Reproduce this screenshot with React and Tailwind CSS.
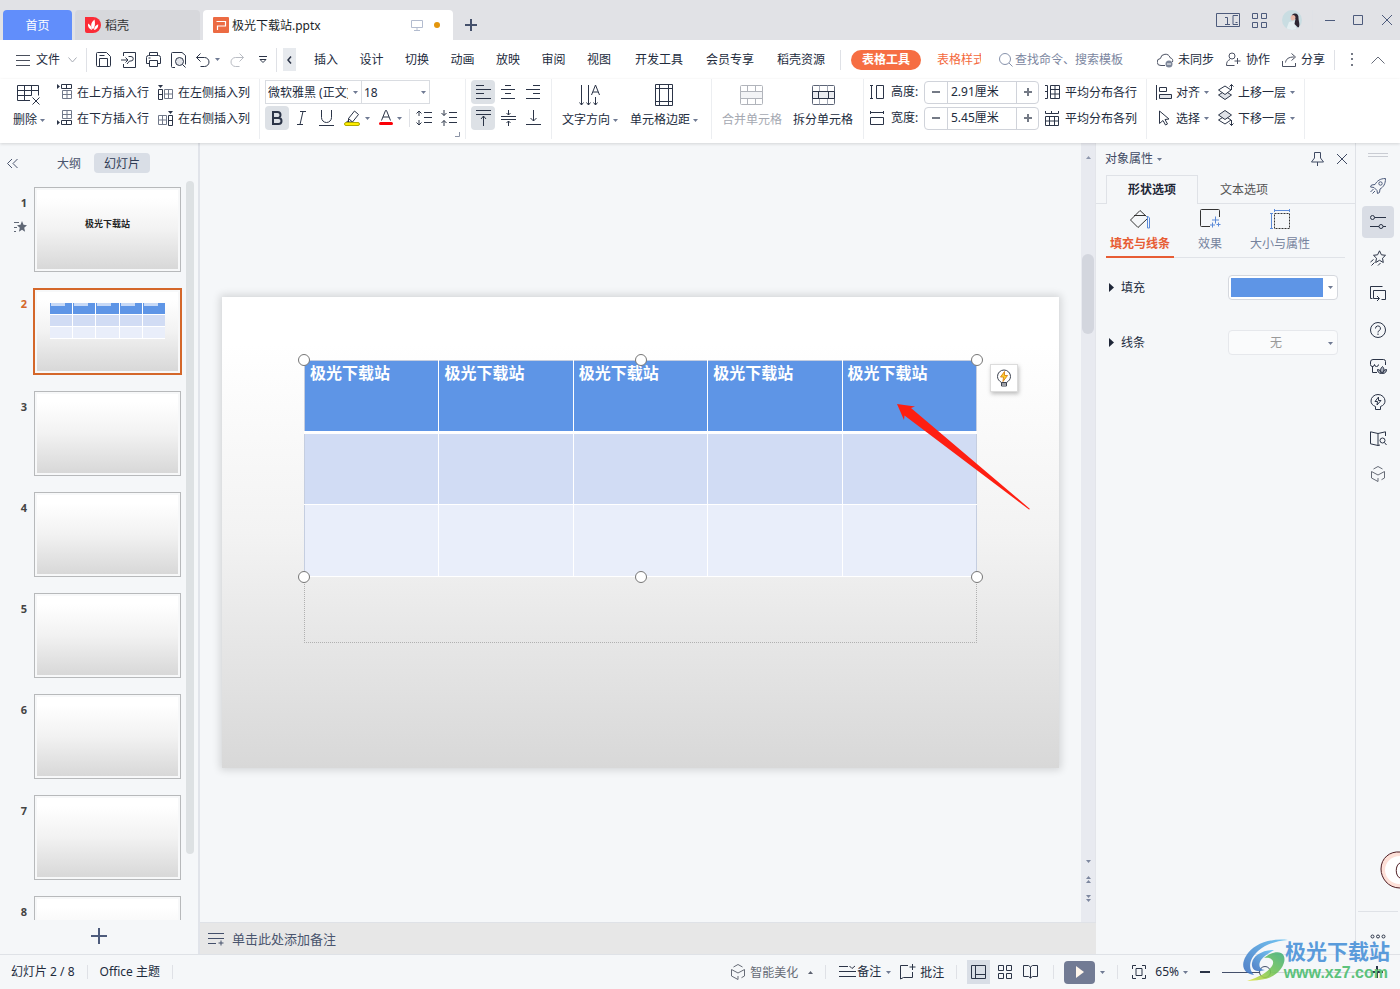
import React from "react";

const INK = "#2b3447";

function Svg({ w, h, children, color = INK, sw = 1, fill = "none", className = "" }) {
  return (
    <svg
      aria-hidden="true"
      width={w}
      height={h}
      viewBox={`0 0 ${w} ${h}`}
      fill={fill}
      stroke={color}
      strokeWidth={sw}
      className={"shrink-0 " + className}
    >
      {children}
    </svg>
  );
}

const Caret = ({ up = false, color = "#6f7a93" }) => (
  <Svg w={5} h={3} color="none">
    <path d={up ? "M0 3h5L2.5 0z" : "M0 0h5L2.5 3z"} fill={color} />
  </Svg>
);

const Divider = ({ className = "h-6" }) => <span className={"w-px shrink-0 bg-[#dfe1e6] " + className} />;

/* ---------- title bar ---------- */

function TitleBar() {
  return (
    <header className="flex h-10 shrink-0 items-end bg-[#e1e2e6] pl-[3px] text-[#44506b]">
      <button className="h-[30px] w-[69px] rounded-t bg-[#618efb] pt-0.5 text-white">首页</button>
      <button className="ml-[3px] flex h-[30px] w-[125px] items-center gap-1 rounded-t bg-[#d7d8dc] pl-[10px] text-[#333]">
        <Svg w={16} h={16} color="none">
          <path d="M0 0h8a8 8 0 0 1 0 16H2a2 2 0 0 1-2-2z" fill="#fb2c37" />
          <path d="M8 12.500C5 9 6 5.500 9.500 2.500c.8 4 .8 7-1.500 10zM7 13C4 12 2.500 9.500 3 6.500 5.500 8 7 10 7 13zM9 13c0-2.500 1.500-5 4.200-5.800C13.500 10.500 11.500 12.500 9 13z" fill="#fff" />
        </Svg>
        <span className="pt-0.5">稻壳</span>
      </button>
      <div className="ml-[3px] flex h-[30px] w-[250px] items-center rounded-t bg-white pl-[10px] pr-[13px] text-[#1b1f29]">
        <Svg w={16} h={16} color="none">
          <rect width="16" height="16" rx="1" fill="#ec6b43" />
          <path d="M3.500 4.500h9v4.500H4.500V13" stroke="#fff" strokeWidth="1.200" />
        </Svg>
        <span className="ml-[3px] flex-1 pt-0.5">极光下载站.pptx</span>
        <Svg w={12} h={12} color="#b3bccf">
          <path d="M.5 1.500h11v7H.5zM6 8.500v3M3 11.500h6" />
        </Svg>
        <span className="ml-[11px] size-[6px] rounded-full bg-[#e3950c]" />
      </div>
      <button aria-label="新建标签" className="flex h-[30px] w-9 items-center justify-center">
        <Svg w={12} h={12} color="#44506b" sw={2}><path d="M6 0v12M0 6h12" /></Svg>
      </button>
      <div className="ml-auto flex h-10 items-center pr-[8px]">
        <button aria-label="窗口">
          <Svg w={24} h={14} color="#4d5b7c">
            <path d="M.5.500h23v13H.5zM9 4.500h2.500v7M9 11.500h5M22 2.500h-5v9h5M19.500 9.500h2" />
          </Svg>
        </button>
        <button aria-label="应用" className="ml-3">
          <Svg w={15} h={15} color="#4d5b7c">
            <path d="M.5.500h5v5h-5zM9.500.500h5v5h-5zM.5 9.500h5v5h-5zM9.500 9.500h5v5h-5z" />
          </Svg>
        </button>
        <button aria-label="账户" className="ml-[15px]">
          <Svg w={20} h={20} color="none">
            <clipPath id="avatar"><circle cx="10" cy="10" r="10" /></clipPath>
            <g clipPath="url(#avatar)">
              <rect width="20" height="20" fill="#c9dde2" />
              <path d="M4 20l3-8 5-1 3 9z" fill="#e4eef1" />
              <path d="M10 5c3-3 7-1 6.500 3 0 3 2 7 0 10l-4-4 1-5-4-1z" fill="#2d2632" />
              <path d="M9.500 5.500c2-1.500 4 0 4 2s-2 3.500-3.500 3-2-3.500-.5-5z" fill="#e9b9a9" />
            </g>
          </Svg>
        </button>
        <Divider className="ml-[10px] mr-[12px] h-5 bg-[#cbcdd3]" />
        <button aria-label="最小化"><Svg w={10} h={10} color="#4d5b7c"><path d="M0 5.500h10" /></Svg></button>
        <button aria-label="最大化" className="ml-[18px]"><Svg w={10} h={10} color="#4d5b7c"><path d="M.5.500h9v9h-9z" /></Svg></button>
        <button aria-label="关闭" className="ml-[19px]"><Svg w={10} h={10} color="#4d5b7c"><path d="M0 0l10 10M10 0L0 10" /></Svg></button>
      </div>
    </header>
  );
}

/* ---------- menu row ---------- */

function MenuBar() {
  return (
    <nav className="flex h-[39px] shrink-0 items-center bg-white">
      <button className="ml-4 flex items-center gap-[6px]">
        <Svg w={14} h={12} color="#4a4f5c"><path d="M0 1.500h14M0 6.500h14M0 11.500h14" /></Svg>
        文件
        <Svg w={9} h={6} color="#a8acb5" className="ml-[2px]"><path d="M.5.500l4 4.500 4-4.500" /></Svg>
      </button>
      <Divider className="ml-[9px] mr-[9px] h-6" />
      <div className="flex items-center gap-[10px]">
        <button aria-label="保存">
          <Svg w={15} h={15}><path d="M.5 1.500a1 1 0 0 1 1-1h9l4 4v9a1 1 0 0 1-1 1h-12a1 1 0 0 1-1-1zM3.500 14.500v-8h8v8M3.500 3.500h5" /></Svg>
        </button>
        <button aria-label="输出为PDF">
          <Svg w={15} h={16}><path d="M2.500 4V.5h12v15h-12V12M0 8h7M4.500 5.500L7 8l-2.500 2.500M7.500 4.500h2.500a2.200 2.200 0 0 1 0 4.500h-1.500l-2.500 3" /></Svg>
        </button>
        <button aria-label="打印">
          <Svg w={15} h={15}><path d="M3.500 3.500v-3h8v3M3.500 11.500h-3v-6a2 2 0 0 1 2-2h10a2 2 0 0 1 2 2v6h-3M3.500 8.500h8v6h-8zM2.500 6h2" /></Svg>
        </button>
        <button aria-label="打印预览">
          <Svg w={15} h={16}><path d="M4 15.500H1.500a1 1 0 0 1-1-1v-13a1 1 0 0 1 1-1h9.500l3.500 3v9M14.500 15.500l-3-3" /><circle cx="8.500" cy="9.500" r="4" fill="#e3e5ea" /></Svg>
        </button>
        <button aria-label="撤销" className="flex items-center gap-[5px]">
          <Svg w={14} h={14}><path d="M4.500.500l-4 4 4 4M.5 4.500h8a4.500 4.500 0 0 1 0 9h-4" /></Svg>
          <Caret />
        </button>
        <button aria-label="恢复">
          <Svg w={14} h={14} color="#b9bcc3"><path d="M9.500.500l4 4-4 4M13.500 4.500h-8a4.500 4.500 0 0 0 0 9h4" /></Svg>
        </button>
      </div>
      <button aria-label="自定义快速访问" className="ml-[15px]">
        <Svg w={8} h={7}><path d="M0 .5h8M1 3.500h6l-3 3z" /></Svg>
      </button>
      <Divider className="ml-[9px] mr-[6px] h-6" />
      <button aria-label="向左滚动" className="flex h-[23px] w-[13px] items-center justify-center bg-[#e7eaee]">
        <Svg w={5} h={8} sw={1.5}><path d="M4 .5L1 4l3 3.500" /></Svg>
      </button>
      <div className="ml-[18px] flex w-[297px] shrink-0 justify-between">
        {["插入", "设计", "切换", "动画", "放映", "审阅", "视图"].map((t) => <button key={t}>{t}</button>)}
      </div>
      <div className="ml-6 flex w-[190px] shrink-0 justify-between">
        {["开发工具", "会员专享", "稻壳资源"].map((t) => <button key={t}>{t}</button>)}
      </div>
      <Divider className="ml-[15px] mr-[10px] h-5" />
      <button className="h-5 w-[70px] shrink-0 rounded-full bg-[#f66e43] font-bold leading-5 text-white">表格工具</button>
      <button className="ml-4 w-11 shrink-0 overflow-hidden whitespace-nowrap text-left text-[#f4683c]">表格样式</button>
      <label className="ml-[18px] flex items-center gap-[2px]">
        <Svg w={14} h={14} color="#8792ab"><circle cx="6" cy="6" r="5.500" /><path d="M10 10l3.500 3.500" /></Svg>
        <input aria-label="查找命令、搜索模板" placeholder="查找命令、搜索模板" className="w-[116px] bg-transparent outline-none placeholder:text-[#7b86a0]" />
      </label>
      <div className="ml-auto flex items-center pr-[15px]">
        <button className="flex items-center gap-1">
          <Svg w={17} h={16} color="#4b5162">
            <path d="M8 13.500H4a3.500 3.500 0 0 1-.6-7 5 5 0 0 1 9.700-.8A3.500 3.500 0 0 1 15.500 10" />
            <circle cx="12" cy="12" r="3.500" fill="#7d8699" stroke="none" /><path d="M10 12h4" stroke="#fff" />
          </Svg>
          未同步
        </button>
        <button className="ml-3 flex items-center gap-[5px]">
          <Svg w={15} h={15} color="#4b5162"><circle cx="6" cy="4" r="3" /><path d="M4 7.500C1.500 8.500.5 10 .5 13.500h8M11.500 6v6M8.500 9h6" /></Svg>
          协作
        </button>
        <button className="ml-3 flex items-center gap-1">
          <Svg w={15} h={14} color="#4b5162"><path d="M.5 8v5.500h13V10M3.500 9.500C4 6 6.500 4 12 4M9.500.500L13.500 4l-4 3.500" /></Svg>
          分享
        </button>
        <Divider className="ml-[9px] h-5" />
        <button aria-label="更多" className="ml-4">
          <Svg w={2} h={13} color="none"><path d="M0 0h2v2H0zM0 5h2v2H0zM0 11h2v2H0z" fill="#747985" /></Svg>
        </button>
        <button aria-label="收起功能区" className="ml-[18px]">
          <Svg w={14} h={8} color="#666c79"><path d="M.5 7.500L7 1l6.500 6.500" /></Svg>
        </button>
      </div>
    </nav>
  );
}

/* ---------- ribbon ---------- */

const RowBtn = ({ icon, children, caret }) => (
  <button className="flex h-6 items-center gap-1 whitespace-nowrap">
    <span className="flex w-4 shrink-0">{icon}</span>
    <span className="pt-0.5">{children}</span>
    {caret && <Caret />}
  </button>
);

const BigBtn = ({ icon, children, caret, disabled }) => (
  <button disabled={disabled} className="flex flex-col items-center whitespace-nowrap disabled:text-[#a4a8b1]">
    <span className="flex h-[30px] items-center">{icon}</span>
    <span className="flex h-5 items-center gap-[3px]">{children}{caret && <Caret />}</span>
  </button>
);

const Tool = ({ label, on, children, className = "w-6" }) => (
  <button
    aria-label={label}
    aria-pressed={!!on}
    className={"flex h-6 items-center justify-center gap-1 rounded-sm aria-pressed:bg-[#dde1e6] " + className}
  >
    {children}
  </button>
);

const Group = ({ children, className = "" }) => (
  <div className={"flex h-[60px] shrink-0 items-start border-r border-[#eceef1] pt-px " + className}>{children}</div>
);

function Spinner({ id, label, value, icon }) {
  return (
    <div className="flex h-6 items-center">
      {icon}
      <label htmlFor={id} className="ml-[7px] w-[33px]">{label}:</label>
      <div className="flex h-[23px] rounded-sm border border-[#d0d3da]">
        <button aria-label={label + "减小"} className="flex w-[22px] items-center justify-center">
          <Svg w={8} h={8} color="#747a86" sw={2}><path d="M0 4h8" /></Svg>
        </button>
        <input id={id} defaultValue={value} className="w-[70px] border-x border-[#d0d3da] bg-transparent pl-[3px] outline-none" />
        <button aria-label={label + "增大"} className="flex w-[21px] items-center justify-center">
          <Svg w={8} h={8} color="#747a86" sw={2}><path d="M0 4h8M4 0v8" /></Svg>
        </button>
      </div>
    </div>
  );
}

const Select = ({ label, value, className }) => (
  <div className={"relative h-6 border border-[#d9dce1] " + className}>
    <select aria-label={label} className="h-full w-full appearance-none overflow-hidden bg-transparent pl-[2px] pr-[13px] pt-0.5 outline-none">
      <option>{value}</option>
    </select>
    <span className="pointer-events-none absolute right-[3px] top-[10px]"><Caret /></span>
  </div>
);

function Ribbon() {
  return (
    <section className="relative z-10 flex h-16 shrink-0 bg-white shadow-[0_1px_3px_rgba(0,0,0,0.14)]">
      <Group className="w-[260px] pl-[13px]">
        <BigBtn caret icon={
          <Svg w={24} h={22}>
            <path d="M13 16.500H.5V1.500h21v10M.5 6.500h21M.5 11.500h14M7.500 1.500v15M14.500 1.500v10" /><path d="M15.500 13.500l7 7M22.500 13.500l-7 7" />
          </Svg>
        }>删除</BigBtn>
        <div className="ml-3 flex flex-col gap-[2px]">
          <RowBtn icon={<Svg w={15} h={16}><path d="M4.500.500h10v4h-10zM9.500.500v4" /><path d="M5.500 6.500h9v8h-9zM10 6.500v8M5.500 10.500h9" stroke="#71798a" /><path d="M0 0v5l3-2.500z" fill={INK} stroke="none" /></Svg>}>在上方插入行</RowBtn>
          <RowBtn icon={<Svg w={15} h={16}><path d="M4.500 10.500h10v4h-10zM9.500 10.500v4" /><path d="M5.500.500h9v8h-9zM10 .5v8M5.500 4.500h9" stroke="#71798a" /><path d="M0 10v5l3-2.500z" fill={INK} stroke="none" /></Svg>}>在下方插入行</RowBtn>
        </div>
        <div className="ml-[9px] flex flex-col gap-[2px]">
          <RowBtn icon={<Svg w={15} h={15}><path d="M.5 4.500h4v10h-4zM.5 9.500h4" /><path d="M6.500 4.500h8v9h-8zM10.500 4.500v9M6.500 9h8" stroke="#71798a" /><path d="M0 0h5L2.500 3z" fill={INK} stroke="none" /></Svg>}>在左侧插入列</RowBtn>
          <RowBtn icon={<Svg w={15} h={15}><path d="M10.500 4.500h4v10h-4zM10.500 9.500h4" /><path d="M.5 4.500h8v9h-8zM4.500 4.500v9M.5 9h8" stroke="#71798a" /><path d="M10 0h5l-2.500 3z" fill={INK} stroke="none" /></Svg>}>在右侧插入列</RowBtn>
        </div>
      </Group>

      <Group className="relative w-[206px] pl-[5px]">
        <div className="flex flex-col gap-[2px]">
          <div className="flex">
            <Select label="字体" value="微软雅黑 (正文)" className="w-[97px]" />
            <Select label="字号" value="18" className="-ml-px w-[69px]" />
          </div>
          <div className="flex items-center">
            <Tool label="加粗" on><Svg w={12} h={14} sw={2}><path d="M2 1h4.500a3 3 0 0 1 0 6H2zM2 7h5.500a3 3 0 0 1 0 6H2z" /></Svg></Tool>
            <Tool label="倾斜"><Svg w={9} h={14}><path d="M3 .5h6M0 13.500h6M6 .5L3 13.500" /></Svg></Tool>
            <Tool label="下划线" className="w-[26px]"><Svg w={15} h={16}><path d="M2.500 0v7.500a5 5 0 0 0 10 0V0M0 15.500h15" /></Svg></Tool>
            <Tool label="突出显示" className="w-9">
              <Svg w={17} h={16}><path d="M4.500 8.500l6-7.500 4 3.500-6 7.500H4.500zM4.500 8.500l4 3.500M2 12.500l2.500-2" /><rect x=".5" y="12.500" width="15" height="3" rx="1.500" fill="#ffee00" stroke="#b1a800" /></Svg>
              <Caret />
            </Tool>
            <Tool label="字体颜色" className="w-[30px]">
              <Svg w={14} h={16}><path d="M2.500 10.500L6.500.500h1l4 10M4 7h6" /><rect y="12" width="14" height="3" rx="1.500" fill="#fb0007" stroke="none" /></Svg>
              <Caret />
            </Tool>
            <Divider className="ml-1 h-[18px]" />
            <Tool label="增大行距" className="w-[27px]"><Svg w={16} h={16}><path d="M3 1v5M.5 3.500L3 1l2.500 2.500M3 10v5M.5 12.500L3 15l2.500-2.500M8 2.500h8M8 7.500h8M8 12.500h8" /></Svg></Tool>
            <Tool label="减小行距"><Svg w={16} h={16}><path d="M3 0v5.500M.5 3L3 5.500 5.500 3M3 16v-5.500M.5 13L3 10.500 5.500 13M8 2.500h8M8 7.500h8M8 12.500h8" /></Svg></Tool>
          </div>
        </div>
        <button aria-label="字体设置" className="absolute bottom-[2px] right-[5px]">
          <Svg w={5} h={5} color="#8b93a5"><path d="M4.500 0v4.500H0" /></Svg>
        </button>
      </Group>

      <Group className="w-[86px] pl-[5px]">
        <div className="grid grid-cols-3 gap-x-px gap-y-[2px]">
          <Tool label="左对齐" on><Svg w={15} h={14}><path d="M0 .5h8M0 4.500h15M0 8.500h8M0 13.500h15" /></Svg></Tool>
          <Tool label="居中对齐"><Svg w={14} h={14}><path d="M4 .5h6M0 4.500h14M4 8.500h6M0 13.500h14" /></Svg></Tool>
          <Tool label="右对齐"><Svg w={14} h={14}><path d="M7 .5h7M0 4.500h14M7 8.500h7M0 13.500h14" /></Svg></Tool>
          <Tool label="顶端对齐" on><Svg w={15} h={16}><path d="M0 .5h15M0 4.500h15M7.500 16V6M5 9l2.500-3L10 9" /></Svg></Tool>
          <Tool label="垂直居中"><Svg w={15} h={16}><path d="M0 6.500h15M0 9.500h15M7.500 0v5M5.500 3l2 2 2-2M7.500 16v-5M5.500 13l2-2 2 2" /></Svg></Tool>
          <Tool label="底端对齐"><Svg w={15} h={16}><path d="M0 14.500h15M7.500 0v11M4.500 8l3 3 3-3" /></Svg></Tool>
        </div>
      </Group>

      <Group className="w-[160px] gap-3 pl-[10px]">
        <BigBtn caret icon={<Svg w={22} h={22}><path d="M2.500 1v20M.5 18.500l2 2.500 2-2.500M9.500 1v20M7.500 18.500l2 2.500 2-2.500M12.500 11L16.500 1l4 10M14 8h5M16.500 13v8M14.500 18.500l2 2.500 2-2.500" /></Svg>}>文字方向</BigBtn>
        <BigBtn caret icon={<Svg w={18} h={22}><path d="M.5.500h17v21H.5zM4.500.500v21M13.500.500v21M.5 4.500h17M.5 17.500h17" /></Svg>}>单元格边距</BigBtn>
      </Group>

      <Group className="w-[152px] justify-center gap-[11px]">
        <BigBtn disabled icon={<Svg w={23} h={20} color="#b1b4bb"><rect x=".5" y=".5" width="22" height="19" rx="1" /><path d="M.5 6.500h22v7H.5z" fill="#f3f4f6" /><path d="M7.500.500v6M15.500.500v6M7.500 13.500v6M15.500 13.500v6" /></Svg>}>合并单元格</BigBtn>
        <BigBtn icon={<Svg w={23} h={20}><rect x=".5" y=".5" width="22" height="19" rx="1" stroke="#5d6577" /><path d="M7.500.500v6M15.500.500v6M7.500 13.500v6M15.500 13.500v6" stroke="#a3a9b5" /><path d="M.5 6.500h22v7H.5z" fill="#e9ebef" /><path d="M6.500 6.500v7M16.500 6.500v7" /></Svg>}>拆分单元格</BigBtn>
      </Group>

      <Group className="w-[283px] gap-[6px] pl-[6px]">
        <div className="flex flex-col gap-[2px]">
          <Spinner id="row-height" label="高度" value="2.91厘米" icon={<Svg w={14} h={14}><path d="M1.500.500v13M0 .5h3M0 13.500h3M6.500.500h7v13h-7z" /></Svg>} />
          <Spinner id="col-width" label="宽度" value="5.45厘米" icon={<Svg w={14} h={14}><path d="M.5 1.500h13M.5 0v3M13.500 0v3M.5 6.500h13v7H.5z" /></Svg>} />
        </div>
        <div className="flex flex-col gap-[2px]">
          <RowBtn icon={<Svg w={15} h={14}><path d="M0 .5h2.500M0 6.500h2.500M0 13.500h2.500M2.500.500v13M5.500.500h9v13h-9zM10 .5v13M5.500 4.500h9M5.500 9h9" /></Svg>}>平均分布各行</RowBtn>
          <RowBtn icon={<Svg w={14} h={15}><path d="M.5 0v2.500M6.500 0v2.500M13.500 0v2.500M.5 2.500h13M.5 5.500h13v9H.5zM.5 10h13M4.500 5.500v9M9.500 5.500v9" /></Svg>}>平均分布各列</RowBtn>
        </div>
      </Group>

      <Group className="w-[158px] gap-[9px] pl-[9px]">
        <div className="flex flex-col gap-[2px]">
          <RowBtn caret icon={<Svg w={16} h={15}><path d="M.5 0v15M3.500 2.500h7v4h-7z" /><path d="M3.500 9.500h12v4h-12z" fill="#e3e5ea" /></Svg>}>对齐</RowBtn>
          <RowBtn caret icon={<Svg w={14} h={16}><path d="M3.500 1l9.500 8-4 .5 2.500 4.500-2 1L7 10.500l-3.500 3z" /></Svg>}>选择</RowBtn>
        </div>
        <div className="flex flex-col gap-[2px]">
          <RowBtn caret icon={<Svg w={16} h={16}><path d="M.5 11l6.500-4 6.500 4L7 15.500z" fill="#dfe2e8" /><path d="M.5 6L7 2l6 4-6 4.500z" fill="#fff" /><path d="M13.500 6V.500M11.500 2.500l2-2 2 2" /></Svg>}>上移一层</RowBtn>
          <RowBtn caret icon={<Svg w={16} h={16}><path d="M.5 10l6.500-4 6 4L7 14z" fill="#fff" /><path d="M.5 5L7 .500 13.500 5 7 9.500z" fill="#dfe2e8" /><path d="M13.500 10v5.500M11.500 13.500l2 2 2-2" /></Svg>}>下移一层</RowBtn>
        </div>
      </Group>
    </section>
  );
}

/* ---------- slide list ---------- */

function MiniTable() {
  const cols = [0, 1, 2, 3, 4];
  return (
    <div className="mx-[13px] mt-[11px] flex flex-col gap-px bg-white pb-px">
      {["bg-[#5e95e6]", "bg-[#d1dcf4]", "bg-[#e9eefa]"].map((c) => (
        <div key={c} className="grid grid-cols-5 gap-px">
          {cols.map((i) => (
            <span key={i} className={"h-[11px] " + c}>
              {c === "bg-[#5e95e6]" && <span className="mx-px block h-[3px] w-[14px] bg-[#c7d9f6]" />}
            </span>
          ))}
        </div>
      ))}
    </div>
  );
}

function SlideList() {
  return (
    <aside className="flex w-[200px] shrink-0 flex-col border-r-2 border-[#e1e4ea]">
      <div className="flex h-[38px] shrink-0 items-center pt-[2px] text-[#4a556e]">
        <button aria-label="收起" className="ml-[7px]">
          <Svg w={11} h={9} color="#4a556e"><path d="M5 0L.5 4.500 5 9M10.500 0L6 4.500 10.500 9" /></Svg>
        </button>
        <button className="ml-[39px] pt-0.5">大纲</button>
        <button className="ml-[13px] h-5 w-14 rounded-sm bg-[#d9dee6] pt-0.5 leading-4 text-[#2f3b55]">幻灯片</button>
      </div>
      <div className="flex min-h-0 flex-1">
        <ol className="flex flex-1 flex-col gap-4 overflow-hidden pt-[6px]">
          {[1, 2, 3, 4, 5, 6, 7, 8].map((n) => (
            <li key={n} className="flex shrink-0 justify-between pr-[5px]">
              <div className="flex w-[27px] flex-col items-end pt-2 text-[11px] font-bold leading-4 text-[#444]">
                <span className={n === 2 ? "text-[#d4672a]" : ""}>{n}</span>
                {n === 1 && (
                  <Svg w={13} h={12} color="#5f6775" className="mt-[10px]">
                    <path d="M0 1.500h5M0 6.500h3M0 10.500h2" />
                    <path d="M8 0l1.500 3.800 3.500.4-2.800 2.500.9 4L8 8.700 4.900 10.700l.9-4L3 4.200l3.500-.4z" fill="#5f6775" stroke="none" />
                  </Svg>
                )}
              </div>
              <button
                aria-label={"幻灯片 " + n}
                className={
                  n === 2
                    ? "-mr-px h-[87px] w-[149px] border-2 border-[#d4672a] bg-[#f7f8f9] p-[2px]"
                    : "h-[85px] w-[147px] border border-[#b7b9bb] bg-[#f7f8f9] p-[2px]"
                }
              >
                <span className="block h-full bg-linear-to-b from-white from-10% via-[#f2f2f2] via-50% to-[#d8d8d8]">
                  {n === 1 && <b className="block pt-[26px] text-[9px] leading-4 text-[#222]">极光下载站</b>}
                  {n === 2 && <span className="flow-root"><MiniTable /></span>}
                </span>
              </button>
            </li>
          ))}
        </ol>
        <div className="mb-[66px] mr-[4px] w-2 shrink-0 rounded-t-full rounded-b-full bg-[#dde1e3]" />
      </div>
      <button aria-label="新建幻灯片" className="flex h-[34px] shrink-0 items-center justify-center">
        <Svg w={16} h={16} color="#4d5b7c" sw={2} className="-mt-0.5"><path d="M8 0v16M0 8h16" /></Svg>
      </button>
    </aside>
  );
}

/* ---------- editing canvas ---------- */

const HANDLES = [
  "left-0 top-0", "left-1/2 top-0", "left-full top-0",
  "left-0 top-full", "left-1/2 top-full", "left-full top-full",
];

function Slide() {
  const cells = [0, 1, 2, 3, 4];
  return (
    <div className="relative mx-[22px] aspect-[837/471] flex-1 bg-linear-to-b from-white from-10% via-[#f3f3f3] via-50% to-[#d8d8d8] px-[82px] pt-[63px] shadow-[0_0_8px_2px_rgba(0,0,0,0.14)]">
      <div className="border border-dotted border-[#b0b0b0] pb-[66px]">
        <div className="relative -m-px">
          <table className="w-full table-fixed border-collapse border border-[#c5cee0]">
            <thead>
              <tr className="h-[72px] border-b-[3px] border-white bg-[#5e95e6]">
                {cells.map((i) => (
                  <th key={i} className="border-r border-white pl-[5px] text-left align-top text-base leading-6 font-bold text-white last:border-[#c5cee0]">
                    极光下载站
                  </th>
                ))}
              </tr>
            </thead>
            <tbody>
              {["bg-[#d1dcf4]", "bg-[#e9eefa]"].map((c) => (
                <tr key={c} className={"h-[72px] " + c}>
                  {cells.map((i) => <td key={i} className="border-b border-r border-white last:border-r-[#c5cee0]" />)}
                </tr>
              ))}
            </tbody>
          </table>
          {HANDLES.map((p) => (
            <span key={p} className={"absolute size-3 -translate-x-1/2 -translate-y-1/2 rounded-full border border-[#767676] bg-white " + p} />
          ))}
          <button aria-label="智能建议" className="absolute left-full top-1 ml-[13px] flex size-7 items-center justify-center border border-[#dcdcdc] bg-white shadow-[1px_2px_4px_rgba(0,0,0,0.25)]">
            <Svg w={16} h={18} color="#3d4350">
              <path d="M5.500 13.500C3 12 1.500 10 1.500 7.500a6.500 6.500 0 0 1 13 0c0 2.500-1.500 4.500-4 6zM5.500 13.500v3.500h5v-3.500M5.500 15h5" />
              <path d="M8.500 2.500L4.500 8h3l-.5 4.500 4.500-6h-3z" fill="#fdd32c" stroke="#dd8a22" />
            </Svg>
          </button>
          <svg aria-hidden="true" className="absolute right-[-53px] top-[43px]" width="134" height="107" viewBox="0 0 134 107">
            <path d="M1 1l18 2.500-4 1.500L134 106l-1 .5L8.500 12.500 8 17z" fill="#fe1f12" />
          </svg>
        </div>
      </div>
    </div>
  );
}

function VScroll() {
  return (
    <div className="flex w-[15px] shrink-0 flex-col items-center border-r border-[#e3e5ea] bg-[#e8eaf0]">
      <div className="pt-[13px]"><Caret up color="#8e97ad" /></div>
      <div className="mt-[95px] h-20 w-3 rounded-full bg-[#d3d6de]" />
      <div className="mt-auto flex flex-col items-center pb-5">
        <Caret color="#7d879f" />
        <div className="mt-[13px] flex flex-col gap-px"><Caret up color="#7d879f" /><Caret up color="#7d879f" /></div>
        <div className="mt-3 flex flex-col gap-px"><Caret color="#7d879f" /><Caret color="#7d879f" /></div>
      </div>
    </div>
  );
}

function Editor() {
  return (
    <main className="flex min-w-0 flex-1 flex-col">
      <div className="flex min-h-0 flex-1">
        <div className="flex min-w-0 flex-1 items-center"><Slide /></div>
        <VScroll />
      </div>
      <label className="flex h-8 shrink-0 items-center gap-2 border-t border-[#dfe2e7] bg-[#e7e7e7] pl-2">
        <Svg w={16} h={14} color="#44506b"><path d="M0 1.500h16M0 6.500h16M0 11.500h8M13 8.500v5M10.500 11h5" /></Svg>
        <input aria-label="备注" placeholder="单击此处添加备注" className="flex-1 bg-transparent text-[13px] outline-none placeholder:text-[#4a556e]" />
      </label>
    </main>
  );
}

/* ---------- properties ---------- */

function Properties() {
  return (
    <aside className="flex w-[260px] shrink-0 flex-col border-r border-[#dfe2e7]">
      <div className="flex h-8 items-center pl-[9px] pr-2 text-[#3f4a63]">
        <button className="flex items-center gap-1">对象属性<Caret /></button>
        <button aria-label="固定" className="ml-auto">
          <Svg w={13} h={14} color="#3f4a63"><path d="M3.500.500h6v5.500l3 4H.5l3-4zM6.500 10v4" /></Svg>
        </button>
        <button aria-label="关闭面板" className="ml-[13px]"><Svg w={10} h={10} color="#3f4a63"><path d="M0 0l10 10M10 0L0 10" /></Svg></button>
      </div>
      <div className="flex h-[29px] items-stretch">
        <span className="w-[10px] border-b border-[#dfe2e7]" />
        <button className="w-[92px] border border-b-0 border-[#dfe2e7] font-bold text-[#1f2738]">形状选项</button>
        <button className="w-[92px] border-b border-[#dfe2e7] pt-0.5 text-[#555]">文本选项</button>
        <span className="flex-1 border-b border-[#dfe2e7]" />
      </div>
      <div className="ml-[10px] mr-[10px] mt-[5px] flex border-b border-[#e0e3e8] text-[#76839d]">
        <button className="-mb-px flex w-[68px] flex-col items-center border-b-2 border-[#e75c34] font-bold text-[#e75c34]">
          <Svg w={20} h={20} color="#333"><path d="M10 1.500l6.500 6M10 1.500L.5 11l7.500 7.500L17 10M4 6.500h12" /><path d="M17.500 7v12h2V9z" stroke="#5b8ad8" /></Svg>
          <span className="flex h-[27px] items-center pt-0.5">填充与线条</span>
        </button>
        <button className="ml-4 flex w-10 flex-col items-center">
          <Svg w={21} h={20} color="#333"><path d="M10 17.500H1.500a1 1 0 0 1-1-1v-15a1 1 0 0 1 1-1h17a1 1 0 0 1 1 1V8" /><path d="M15.500 7.500v7M12 11h7M12.500 13.500v5M10 16h5M18.500 13.500v4M16.500 15.500h4" stroke="#5b8ad8" /></Svg>
          <span className="flex h-[27px] items-center pt-0.5">效果</span>
        </button>
        <button className="ml-5 flex w-[60px] flex-col items-center">
          <Svg w={20} h={20} color="#333"><path d="M4.500 4.500h15v15h-15z" strokeDasharray="2 1" /><path d="M4.500 1.500h15M4.500 0v3M19.500 0v3M1.500 4.500v15M0 4.500h3M0 19.500h3" stroke="#5b8ad8" /></Svg>
          <span className="flex h-[27px] items-center pt-0.5">大小与属性</span>
        </button>
      </div>
      <div className="flex items-center pl-[13px] pr-[17px] pt-[17px]">
        <Svg w={5} h={9} color="none"><path d="M0 0v9l5-4.500z" fill="#1f2738" /></Svg>
        <span className="ml-[7px]">填充</span>
        <button aria-label="填充颜色" className="ml-auto flex h-[25px] w-[110px] items-center justify-between rounded-sm border border-[#d5d8de] bg-white pl-[2px] pr-1">
          <span className="h-[19px] w-[92px] bg-[#5e95e6]" /><Caret />
        </button>
      </div>
      <div className="flex items-center pl-[13px] pr-[17px] pt-[30px]">
        <Svg w={5} h={9} color="none"><path d="M0 0v9l5-4.500z" fill="#1f2738" /></Svg>
        <span className="ml-[7px]">线条</span>
        <div className="relative ml-auto h-[25px] w-[110px] rounded-sm border border-[#e6e8ec] bg-[#fafbfc]">
          <select aria-label="线条" className="h-full w-full appearance-none bg-transparent pr-[14px] text-center text-[#999] outline-none"><option>无</option></select>
          <span className="pointer-events-none absolute right-1 top-[11px]"><Caret /></span>
        </div>
      </div>
    </aside>
  );
}

/* ---------- right rail ---------- */

const CUBE = "M3.500 3L8 .5 12.500 3M1.500 5.500V12L8 15.500V12M1.500 5.500L8 9l6.500-3.500V12l-3 1.700";

const RAIL = [
  ["推荐", <Svg w={16} h={16} color="#4d5b7c"><path d="M15.500.500C10 .5 7 3 5 6.500l-3.500.500L.5 9l3.500.500 3 3 .5 3 2-1 .5-3.500C13.500 9 15.500 6 15.500.500z" /><circle cx="10.500" cy="5.500" r="1.700" /><path d="M3.500 11L.5 14M5 13l-2.500 2.500" /></Svg>],
  ["对象属性", <Svg w={16} h={14}><circle cx="2.500" cy="2.500" r="2" /><path d="M4.500 2.500H16M0 11.500h9M13 11.500h3" /><circle cx="11" cy="11.500" r="2" /></Svg>],
  ["动画", <Svg w={16} h={16}><path d="M9.500.800l1.900 4 4.100.5-3 2.900.8 4.300-3.800-2.200-3.800 2.200.8-4.300-3-2.900 4.100-.5z" /><path d="M3.500 9.500L.5 12M4.500 12.500l-3 3M10.500 13l-2.500 2.500" /></Svg>],
  ["切换", <Svg w={16} h={16}><path d="M2.500 12.500H.5V.500h12M3.500 9V4.500h12v9h-4M3.500 9v3.500h5.500M7 10l2.500 2.500L7 15" /></Svg>],
  ["帮助", <Svg w={16} h={16}><circle cx="8" cy="8" r="7.500" /><path d="M5.500 6.500a2.500 2.500 0 1 1 3.500 2.200c-.7.4-1 .8-1 1.800M8 11.500v1.500" /></Svg>],
  ["稻壳", <Svg w={17} h={16}><path d="M3 1.500h10.500a2 2 0 0 1 2 2V7M2.500 8v6.500H7M3 1.500a2.500 2.500 0 0 0-2.500 2.500v2.500a2 2 0 0 0 4 0 2 2 0 0 0 4 0" /><path d="M12 15.500c-2-1.500-2-5 .5-7 2 2 2 5-.5 7zM11.500 15.500c-3 0-4-2-4-4 2 0 3.500 1.500 4 4zM12.500 15.500c3 0 4-2 4-4-2 0-3.500 1.500-4 4z" fill="#aeb4c0" /></Svg>],
  ["灵感", <Svg w={16} h={16}><path d="M5.500 12.500C2.500 11.500 1 9.500 1 7a7 6.500 0 0 1 14 0c0 2.500-1.500 4.500-4.500 5.500v3h-5z" /><path d="M8.500 3L5 7.500h2.500L7 11l4-4.500H8.500z" /></Svg>],
  ["素材库", <Svg w={17} h={15}><path d="M8 2.500L.5.800v12L8 14.500zM8 2.500L15.500.800V5M8 14.500l2-.5" /><circle cx="12.500" cy="9.500" r="2.500" /><path d="M14.500 11.500l2 2.500" /></Svg>],
  ["智能美化", <Svg w={16} h={16} color="#666b76"><path d={CUBE} /></Svg>],
];

function Rail() {
  return (
    <aside className="relative flex w-[44px] shrink-0 flex-col items-center">
      <div className="mt-[10px] h-1 w-5 shrink-0 border-y border-[#c9ccd3]" />
      <div className="mt-[13px] flex flex-col gap-1">
        {RAIL.map(([name, icon]) => (
          <button key={name} aria-label={name} aria-pressed={name === "对象属性"} className="flex size-8 items-center justify-center rounded-sm aria-pressed:bg-[#d9dde5]">
            {icon}
          </button>
        ))}
      </div>
      <button aria-label="助手" className="absolute bottom-[65px] right-0">
        <Svg w={20} h={38} color="#4e1c22">
          <path d="M20 1C10 0 1 7 1 18c0 9 7 19 19 19" fill="#fde0d8" />
          <path d="M20 5C12 5 5 11 5 19c0 7 6 14 15 14z" fill="#fff" stroke="none" />
          <path d="M20 12c-5 2-5 13 0 15" />
        </Svg>
      </button>
      <div className="mt-auto h-px w-10 shrink-0 bg-[#dfe2e7]" />
      <button aria-label="更多工具" className="mb-[15px] mt-[22px]">
        <Svg w={16} h={5}><circle cx="2.500" cy="2.500" r="1.500" /><circle cx="8" cy="2.500" r="1.500" /><circle cx="13.500" cy="2.500" r="1.500" /></Svg>
      </button>
    </aside>
  );
}

/* ---------- status bar ---------- */

function StatusBar() {
  return (
    <footer className="flex h-[35px] shrink-0 items-center whitespace-nowrap border-t border-[#dfe2e7] pr-[17px]">
      <span className="ml-[11px]">幻灯片 2 / 8</span>
      <Divider className="mx-3 h-[14px]" />
      <span>Office 主题</span>
      <Divider className="ml-3 h-[14px]" />
      <div className="ml-auto flex items-center">
        <button className="flex items-center gap-1 text-[#666b76]">
          <Svg w={16} h={16} color="#666b76"><path d={CUBE} /></Svg>
          <span className="pt-0.5">智能美化</span>
          <span className="ml-[6px]"><Caret up color="#5c6170" /></span>
        </button>
        <Divider className="ml-3 mr-[13px] h-[14px]" />
        <button className="flex items-center gap-px">
          <Svg w={17} h={14}><path d="M0 1.500h9M0 6.500h17M0 11.500h17M10.500 1l2.500 2.500L16 1" /></Svg>
          备注<span className="ml-1"><Caret /></span>
        </button>
        <button className="ml-[9px] flex items-center gap-1">
          <Svg w={16} h={16}><path d="M8 1.500H.5v13.500l3-1.500h9V8M12.500 0v6M9.500 3h6" /></Svg>
          <span className="pt-0.5">批注</span>
        </button>
        <Divider className="ml-3 mr-[10px] h-[14px]" />
        <button aria-label="普通视图" className="flex h-6 w-[23px] items-center justify-center bg-[#d9dee6]">
          <Svg w={15} h={14}><path d="M.5.500h14v13H.5zM4.500.500v13M4.500 9.500h10" /></Svg>
        </button>
        <button aria-label="幻灯片浏览" className="ml-2"><Svg w={14} h={14}><path d="M.5.500h5v5h-5zM8.500.500h5v5h-5zM.5 8.500h5v5h-5zM8.500 8.500h5v5h-5z" /></Svg></button>
        <button aria-label="阅读视图" className="ml-[11px]"><Svg w={15} h={14}><path d="M7.500 2l-2-1.500h-5v11h5l2 1.500 2-1.500h5V.500h-5zM7.500 2v11" /></Svg></button>
        <Divider className="ml-[15px] mr-[10px] h-[14px]" />
        <button aria-label="放映" className="flex h-[23px] w-[31px] items-center justify-center rounded-sm bg-[#727b94]">
          <Svg w={8} h={12} color="none"><path d="M0 0v12l8-6z" fill="#fff6ec" /></Svg>
        </button>
        <button aria-label="放映选项" className="ml-[5px] flex"><Caret /></button>
        <Divider className="ml-3 mr-[14px] h-[14px]" />
        <button aria-label="适应窗口"><Svg w={14} h={14}><path d="M.5 4V.500H4M10 .5h3.500V4M13.500 10v3.500H10M4 13.500H.5V10M4 3.500h6v7H4z" /></Svg></button>
        <button className="ml-[9px] flex items-center gap-1">65%<Caret /></button>
        <button aria-label="缩小" className="ml-3"><Svg w={10} h={10} sw={2}><path d="M0 5h10" /></Svg></button>
        <input
          type="range"
          aria-label="缩放"
          min="0"
          max="100"
          defaultValue="27"
          className="ml-[12px] h-3 w-[149px] appearance-none bg-[linear-gradient(90deg,#44506b_0_38px,#cfd3da_38px)] bg-[length:100%_1px] bg-center bg-no-repeat [&::-webkit-slider-thumb]:size-3 [&::-webkit-slider-thumb]:appearance-none [&::-webkit-slider-thumb]:rounded-full [&::-webkit-slider-thumb]:border [&::-webkit-slider-thumb]:border-[#44506b] [&::-webkit-slider-thumb]:bg-[#f5f7f9]"
        />
        <button aria-label="放大"><Svg w={12} h={12} sw={2}><path d="M0 6h12M6 0v12" /></Svg></button>
      </div>
    </footer>
  );
}

function Watermark() {
  return (
    <div className="pointer-events-none absolute bottom-[5px] right-[10px] z-20 flex items-center">
      <svg aria-hidden="true" width="48" height="46" viewBox="0 0 48 46" opacity="0.88">
        <defs>
          <linearGradient id="wb" x1="0" y1="1" x2="1" y2="0"><stop offset="0" stopColor="#3c6fc0" /><stop offset="1" stopColor="#62c0f2" /></linearGradient>
          <linearGradient id="wg" x1="0" y1="1" x2="1" y2="0"><stop offset="0" stopColor="#e4e43c" /><stop offset=".5" stopColor="#72c455" /><stop offset="1" stopColor="#3fae7c" /></linearGradient>
        </defs>
        <path d="M46 2C28 0 11 6 4 18-2 28 2 36 12 37 5 30 8 20 16 13 24 6 34 3 46 2z" fill="url(#wb)" />
        <path d="M32 12C20 12 11 18 10 25c-1 7 5 10 13 7-6-1-7-5-4-10 3-4 8-7 13-10z" fill="url(#wb)" />
        <path d="M22 20c6-5 13-7 17-5 6 3 4 13-4 20-8 7-18 7-30 8 12-4 20-8 25-15 3-5 0-9-8-8z" fill="url(#wg)" />
      </svg>
      <div className="-ml-[6px] text-right">
        <div className="text-[21px] font-bold leading-6 text-[#5a9bdb]">极光下载站</div>
        <div className="pr-[2px] font-[Arial,'Liberation_Sans',sans-serif] text-[16px] font-bold leading-5 text-[#5cc27c]">www.xz7.com</div>
      </div>
    </div>
  );
}

export default function App() {
  return (
    <div className="relative flex h-screen flex-col overflow-hidden bg-[#f5f7f9] font-['Noto_Sans','Noto_Sans_CJK_SC',sans-serif] text-[12px] leading-4 text-[#222b3d]">
      <TitleBar />
      <MenuBar />
      <Ribbon />
      <div className="flex min-h-0 flex-1">
        <SlideList />
        <Editor />
        <Properties />
        <Rail />
      </div>
      <StatusBar />
      <Watermark />
    </div>
  );
}
